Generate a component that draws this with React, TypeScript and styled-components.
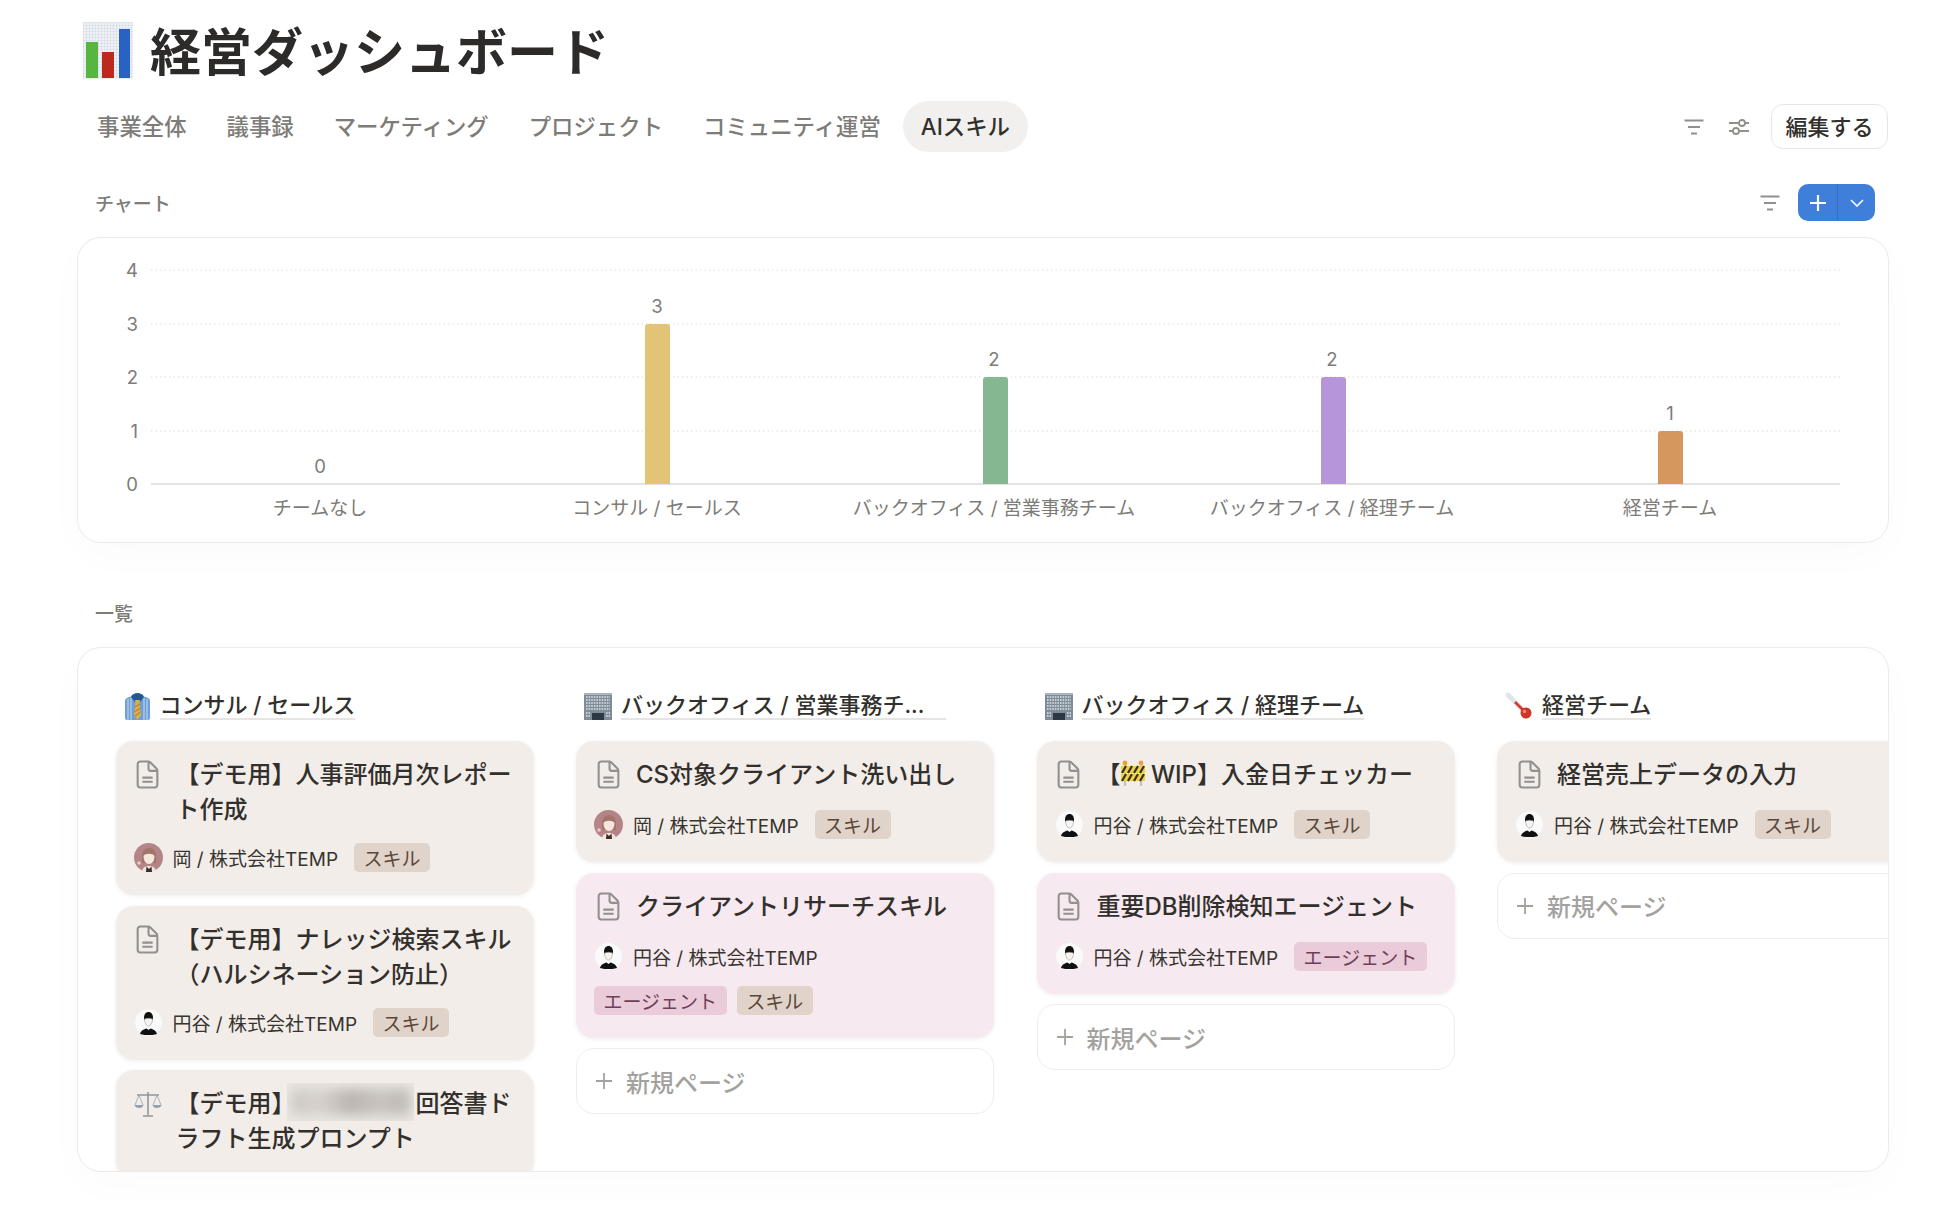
import React from "react";
import styled, { createGlobalStyle } from "styled-components";

const GlobalStyle = createGlobalStyle`
  html, body {
    margin: 0;
    padding: 0;
    background: #ffffff;
    overflow: hidden;
  }
  body {
    font-family: Inter, "Noto Sans CJK JP", sans-serif;
    color: #32302c;
  }
`;

const Page = styled.div`
  width: 1952px;
  height: 1232px;
  box-sizing: border-box;
  padding: 22px 64px 0 77px;
  overflow: hidden;
`;

const TitleRow = styled.div`
  display: flex;
  align-items: center;
  gap: 17px;
  padding-left: 6px;
  height: 57px;
`;

const PageTitle = styled.h1`
  margin: 0;
  padding-top: 3px;
  font-size: 51px;
  line-height: 57px;
  font-weight: 700;
  color: #2c2b29;
`;

const ViewBar = styled.div`
  display: flex;
  align-items: center;
  justify-content: space-between;
  margin-top: 22px;
  height: 51px;
`;

const Tabs = styled.div`
  display: flex;
  gap: 4px;
  padding-left: 2px;
`;

const Tab = styled.div<{ $active?: boolean }>`
  box-sizing: border-box;
  height: 51px;
  padding: 0 18px 4px;
  display: flex;
  align-items: center;
  border-radius: 26px;
  font-size: 22.4px;
  font-weight: 500;
  color: ${(p) => (p.$active ? "#32302c" : "#7d7c78")};
  background: ${(p) => (p.$active ? "#f1f0ee" : "transparent")};
`;

const Tools = styled.div`
  display: flex;
  align-items: center;
  gap: 22px;
`;

const ToolIcons = styled.div`
  display: flex;
  align-items: center;
  gap: 25px;
`;

const EditButton = styled.button`
  box-sizing: border-box;
  width: 117px;
  height: 45px;
  background: #ffffff;
  border: 1.5px solid #e8e7e5;
  border-radius: 12px;
  font-family: inherit;
  font-size: 22px;
  font-weight: 500;
  color: #32302c;
  padding: 0 0 4px;
`;

const SectionBar = styled.div`
  display: flex;
  align-items: center;
  justify-content: space-between;
  height: 37px;
  margin-top: 32px;
  padding: 0 13px 0 18px;
`;

const SectionLabel = styled.div`
  font-size: 19px;
  font-weight: 500;
  color: #7d7c78;
`;

const SectionTools = styled.div`
  display: flex;
  align-items: center;
  gap: 18px;
`;

const NewButton = styled.div`
  display: flex;
  width: 77px;
  height: 37px;
  border-radius: 10px;
  overflow: hidden;
  background: #3f7fd9;
`;

const NewPlus = styled.div`
  flex: 1;
  display: flex;
  align-items: center;
  justify-content: center;
  border-right: 1px solid #3470c4;
`;

const NewCaret = styled.div`
  width: 37px;
  display: flex;
  align-items: center;
  justify-content: center;
`;

const Panel = styled.div`
  box-sizing: border-box;
  width: 1812px;
  background: #ffffff;
  border: 1.5px solid #ecebe9;
  border-radius: 24px;
  box-shadow: 0 12px 44px rgba(0, 0, 0, 0.018);
`;

const ChartPanel = styled(Panel)`
  height: 306px;
  margin-top: 16px;
`;

const ChartSvg = styled.svg`
  display: block;
  font-family: Inter, "Noto Sans CJK JP", sans-serif;
  font-size: 18.5px;
  fill: #7d7c78;
`;

const CategoryLabel = styled.text`
  font-size: 19px;
`;

const ListLabel = styled(SectionLabel)`
  margin-top: 61px;
  padding-left: 18px;
  line-height: 22px;
`;

const BoardPanel = styled(Panel)`
  height: 525px;
  margin-top: 21px;
  padding: 44px 0 0 37.5px;
  display: flex;
  gap: 42.5px;
  overflow: hidden;
`;

const Column = styled.div`
  flex: 0 0 418px;
  display: flex;
  flex-direction: column;
  gap: 10.5px;
`;

const ColumnHead = styled.div`
  display: flex;
  align-items: center;
  gap: 9px;
  height: 28px;
  padding-left: 8px;
  margin-bottom: 10.5px;
`;

const ColumnTitle = styled.div<{ $truncated?: boolean }>`
  min-width: ${(p) => (p.$truncated ? "325px" : "0")};
  font-size: 22px;
  line-height: 26px;
  font-weight: 500;
  color: #32302c;
  white-space: nowrap;
  border-bottom: 2px solid #e6e5e3;
`;

const Card = styled.div<{ $tone: "brown" | "pink" }>`
  flex: none;
  box-sizing: border-box;
  padding: 16px 16px 23px 18px;
  border-radius: 18px;
  background: ${(p) => (p.$tone === "pink" ? "#f7e9f0" : "#f3ede9")};
  box-shadow: 0 1px 4px rgba(60, 40, 30, 0.08);
`;

const CardTitle = styled.div`
  display: flex;
  gap: 14px;
  min-height: 37px;
  font-size: 24px;
  line-height: 35px;
  font-weight: 500;
  color: #32302c;
`;

const IconSlot = styled.div`
  flex: 0 0 28px;
  height: 35px;
  display: flex;
  align-items: center;
  justify-content: center;
`;

const Redacted = styled.span`
  position: relative;
  display: inline-block;
  width: 120px;
  height: 1em;
  vertical-align: -0.1em;
`;

const RedactedBlur = styled.span`
  position: absolute;
  left: -9px;
  top: -7px;
  width: 127px;
  height: 38px;
  overflow: hidden;
  background: #ebe6e2;
  &::after {
    content: "";
    position: absolute;
    inset: 6px 4px;
    filter: blur(6px);
    background: linear-gradient(90deg, #cdc8c4, #d6d1cd 25%, #b9b4b0 50%, #c8c3bf 75%, #bdb8b4);
  }
`;

const CardMeta = styled.div`
  display: flex;
  flex-wrap: wrap;
  gap: 15px 16px;
  margin-top: 16px;
`;

const Person = styled.div`
  display: flex;
  align-items: center;
  gap: 10px;
  height: 29px;
  font-size: 19px;
  color: #37352f;
`;

const TagList = styled.div`
  display: flex;
  gap: 10px;
`;

const Tag = styled.span<{ $kind: "skill" | "agent" }>`
  height: 29px;
  display: flex;
  align-items: center;
  padding: 0 9.5px;
  border-radius: 5px;
  font-size: 19px;
  color: ${(p) => (p.$kind === "agent" ? "#6f3f58" : "#5b4638")};
  background: ${(p) => (p.$kind === "agent" ? "#eacbd9" : "#e0d3ca")};
`;

const NewPage = styled.div`
  flex: none;
  box-sizing: border-box;
  height: 66px;
  display: flex;
  align-items: center;
  gap: 14px;
  padding-left: 19px;
  border: 1.5px solid #eeedeb;
  border-radius: 18px;
  background: #ffffff;
  font-size: 24px;
  font-weight: 500;
  color: #a3a29f;
`;

const FilterIcon = () => (
  <svg width="20" height="16" viewBox="0 0 20 16" fill="none" stroke="#91908d" strokeWidth="2.2">
    <path d="M0.5 1.5H19.5M4 8H16M7 14.5H13" />
  </svg>
);

const SlidersIcon = () => (
  <svg width="20" height="18" viewBox="0 0 20 18" fill="none" stroke="#91908d" strokeWidth="1.8">
    <path d="M0 5H10M16 5H20M0 13H4M10 13H20" />
    <circle cx="13" cy="5" r="3" />
    <circle cx="7" cy="13" r="3" />
  </svg>
);

const DocIcon = () => (
  <svg width="23" height="29" viewBox="0 0 22 28" fill="none" stroke="#91908d" strokeWidth="2">
    <path d="M4 1.5H11.5C12.5 1.5 13.3 1.9 14 2.6L19.4 8C20.1 8.7 20.5 9.5 20.5 10.5V24A2.5 2.5 0 0 1 18 26.5H4A2.5 2.5 0 0 1 1.5 24V4A2.5 2.5 0 0 1 4 1.5Z" />
    <path d="M12 2V8.5A2 2 0 0 0 14 10.5H20" />
    <path d="M6 17H16M6 21H16" />
  </svg>
);

const BarChartEmoji = () => (
  <svg width="50" height="57" viewBox="0 0 50 57">
    <defs>
      <pattern id="chartGrid" width="3" height="3" patternUnits="userSpaceOnUse">
        <rect width="3" height="3" fill="#eef1f5" />
        <path d="M0 0H3M0 0V3" stroke="#d3dae4" strokeWidth="1" />
      </pattern>
    </defs>
    <rect width="50" height="57" fill="url(#chartGrid)" />
    <rect x="3" y="20" width="12" height="36" fill="#56b63f" />
    <rect x="19" y="30" width="12" height="26" fill="#bb2a1c" />
    <rect x="36" y="7" width="11" height="49" fill="#2a62c4" />
  </svg>
);

const ShirtEmoji = () => (
  <svg width="27" height="27" viewBox="0 0 27 27">
    <path d="M1 8C1 5 5 4 9 3H18C22 4 26 5 26 8V25C26 26 25 27 24 27H3C2 27 1 26 1 25Z" fill="#6f9fd8" />
    <path d="M4 6V27M7 5V27M20 5V27M23 6V27" stroke="#b8d2ef" strokeWidth="1.2" />
    <path d="M7 4C8 1 11 0 13.5 0S19 1 20 4L16 9H11Z" fill="#23598f" />
    <path d="M11 7H16L15.5 10L17 22L13.5 27L10 22L11.5 10Z" fill="#e0ad45" />
    <path d="M11 14L16 11M10.5 19L16.5 15M11 23L16.5 19" stroke="#a9762a" strokeWidth="1" />
  </svg>
);

const BuildingEmoji = () => (
  <svg width="28" height="27" viewBox="0 0 28 27">
    <rect width="28" height="27" fill="#7f8c98" />
    <rect y="0" width="28" height="2" fill="#a9b4bd" />
    <path d="M2 4H26M2 7H26M2 10H26M2 13H26M2 16H26" stroke="#dce3e9" strokeWidth="1.4" strokeDasharray="1.6 1" />
    <rect x="8" y="20" width="12" height="7" fill="#2c3844" />
    <path d="M2 20H6M2 23H6M22 20H26M22 23H26" stroke="#dce3e9" strokeWidth="1.4" strokeDasharray="1.6 1" />
  </svg>
);

const ThermometerEmoji = () => (
  <svg width="28" height="28" viewBox="0 0 28 28">
    <path d="M3 3L19 19" stroke="#e1e6ea" strokeWidth="5" strokeLinecap="round" />
    <path d="M10 10L20 20" stroke="#d53a2c" strokeWidth="2.6" />
    <circle cx="21" cy="21" r="5.5" fill="#cf3426" />
    <circle cx="19.5" cy="19.5" r="1.8" fill="#ef8a7e" />
  </svg>
);

const BarrierEmoji = () => (
  <svg width="24" height="26" viewBox="0 0 24 26" style={{ verticalAlign: "-0.14em" }}>
    <path d="M4 4V26M20 4V26" stroke="#c3c5c7" strokeWidth="2.4" />
    <circle cx="4" cy="3" r="2.4" fill="#f0a030" />
    <circle cx="20" cy="3" r="2.4" fill="#f0a030" />
    <rect x="0" y="6" width="24" height="7" fill="#f2cf45" />
    <rect x="0" y="14" width="24" height="7" fill="#f2cf45" />
    <path d="M1 13L5 6M7 13L11 6M13 13L17 6M19 13L23 6M1 21L5 14M7 21L11 14M13 21L17 14M19 21L23 14" stroke="#33312c" strokeWidth="2.2" />
  </svg>
);

const ScalesEmoji = () => (
  <svg width="28" height="28" viewBox="0 0 28 28" fill="none">
    <path d="M14 2V25M3 5H25M9 26H19" stroke="#8f969d" strokeWidth="1.6" />
    <path d="M5 5L1 15M5 5L9 15M23 5L19 15M23 5L27 15" stroke="#a6acb2" strokeWidth="0.9" />
    <path d="M0.5 15H9.5C9 19 1 19 0.5 15ZM18.5 15H27.5C27 19 19 19 18.5 15Z" fill="#8ea0b3" />
  </svg>
);

const OkaAvatar = () => (
  <svg width="29" height="29" viewBox="0 0 29 29">
    <circle cx="14.5" cy="14.5" r="14.5" fill="#b58488" />
    <path d="M8 14C8 8 11 5 15 5S22 8 22 14V20H8Z" fill="#a3756a" />
    <path d="M9.5 13C11 10 19 10 20.5 13C20.5 18 18 21 15 21S9.5 18 9.5 13Z" fill="#f7e6dc" />
    <path d="M8 29C8 25 11 23 15 23S22 25 22 29Z" fill="#efe6dd" />
    <path d="M12.5 23.5L15 26L17.5 23.5L18 29H12Z" fill="#3a2c28" />
    <circle cx="5" cy="20" r="1.8" fill="#e4cdc7" />
  </svg>
);

const TsuburayaAvatar = () => (
  <svg width="29" height="29" viewBox="0 0 29 29">
    <circle cx="14.5" cy="14.5" r="14" fill="#fafafa" stroke="#eeeded" />
    <path d="M10 10C10 6 12 4 14.5 4S19 6 19 10L18.5 12H10.5Z" fill="#111111" />
    <path d="M10.5 11C10.5 15 12.5 18 14.5 18S18.5 15 18.5 11C16 10 13 10 10.5 11Z" fill="#f7f3f0" stroke="#888888" strokeWidth="0.5" />
    <path d="M6 26C6.5 23 10 21 12.5 20.5L14.5 22L16.5 20.5C19 21 22.5 23 23 26C20 27 17 27 14.5 27S9 27 6 26Z" fill="#111111" />
  </svg>
);

const chartLeft = 73;
const chartRight = 1762;
const yTicks = [
  { label: "4", y: 32 },
  { label: "3", y: 86 },
  { label: "2", y: 139 },
  { label: "1", y: 193 },
];
const baseY = 246;

const chartBars = [
  { name: "チームなし", value: 0, center: 242, barX: 0, top: baseY, color: "" },
  { name: "コンサル / セールス", value: 3, center: 579, barX: 567, top: 86, color: "#e3c476" },
  { name: "バックオフィス / 営業事務チーム", value: 2, center: 916, barX: 905, top: 139, color: "#85b891" },
  { name: "バックオフィス / 経理チーム", value: 2, center: 1254, barX: 1243, top: 139, color: "#b795d9" },
  { name: "経営チーム", value: 1, center: 1592, barX: 1580, top: 193, color: "#d6975f" },
];

const Chart = () => (
  <ChartSvg width="1809" height="303" viewBox="0 0 1809 303">
    {yTicks.map((t) => (
      <line key={t.label} x1={chartLeft} x2={chartRight} y1={t.y} y2={t.y} stroke="#dedddb" strokeDasharray="1.5 3" />
    ))}
    <line x1={chartLeft} x2={chartRight} y1={baseY} y2={baseY} stroke="#e4e3e1" strokeWidth="2" />
    {[...yTicks, { label: "0", y: baseY }].map((t) => (
      <text key={t.label} x="60" y={t.y} textAnchor="end" dominantBaseline="central">
        {t.label}
      </text>
    ))}
    {chartBars.map((b) => (
      <g key={b.name}>
        {b.value > 0 && (
          <path
            d={`M${b.barX} ${baseY}V${b.top + 3}Q${b.barX} ${b.top} ${b.barX + 3} ${b.top}H${b.barX + 22}Q${b.barX + 25} ${b.top} ${b.barX + 25} ${b.top + 3}V${baseY}Z`}
            fill={b.color}
          />
        )}
        <text x={b.center} y={b.top - 18} textAnchor="middle" dominantBaseline="central">
          {b.value}
        </text>
        <CategoryLabel x={b.center} y="270" textAnchor="middle" dominantBaseline="central">
          {b.name}
        </CategoryLabel>
      </g>
    ))}
  </ChartSvg>
);

type CardData = {
  title: React.ReactNode;
  tone: "brown" | "pink";
  who?: "oka" | "tsuburaya";
  tags?: ("skill" | "agent")[];
  icon?: React.ReactNode;
};

const people = {
  oka: { name: "岡 / 株式会社TEMP", avatar: <OkaAvatar /> },
  tsuburaya: { name: "円谷 / 株式会社TEMP", avatar: <TsuburayaAvatar /> },
};

const tagLabels = { skill: "スキル", agent: "エージェント" };

const columns: { title: string; truncated?: boolean; emoji: React.ReactNode; cards: CardData[]; hasNew: boolean }[] = [
  {
    title: "コンサル / セールス",
    emoji: <ShirtEmoji />,
    hasNew: false,
    cards: [
      { title: "【デモ用】人事評価月次レポート作成", tone: "brown", who: "oka", tags: ["skill"] },
      { title: "【デモ用】ナレッジ検索スキル（ハルシネーション防止）", tone: "brown", who: "tsuburaya", tags: ["skill"] },
      {
        // the rest of this card sits below the panel's clip
        title: (
          <>
            【デモ用】
            <Redacted>
              <RedactedBlur />
            </Redacted>
            回答書ドラフト生成プロンプト
          </>
        ),
        tone: "brown",
        icon: <ScalesEmoji />,
      },
    ],
  },
  {
    title: "バックオフィス / 営業事務チ...",
    truncated: true,
    emoji: <BuildingEmoji />,
    hasNew: true,
    cards: [
      { title: "CS対象クライアント洗い出し", tone: "brown", who: "oka", tags: ["skill"] },
      { title: "クライアントリサーチスキル", tone: "pink", who: "tsuburaya", tags: ["agent", "skill"] },
    ],
  },
  {
    title: "バックオフィス / 経理チーム",
    emoji: <BuildingEmoji />,
    hasNew: true,
    cards: [
      {
        title: (
          <>
            【<BarrierEmoji /> WIP】入金日チェッカー
          </>
        ),
        tone: "brown",
        who: "tsuburaya",
        tags: ["skill"],
      },
      { title: "重要DB削除検知エージェント", tone: "pink", who: "tsuburaya", tags: ["agent"] },
    ],
  },
  {
    title: "経営チーム",
    emoji: <ThermometerEmoji />,
    hasNew: true,
    cards: [{ title: "経営売上データの入力", tone: "brown", who: "tsuburaya", tags: ["skill"] }],
  },
];

const App = () => (
  <Page>
    <GlobalStyle />
    <TitleRow>
      <BarChartEmoji />
      <PageTitle>経営ダッシュボード</PageTitle>
    </TitleRow>
    <ViewBar>
      <Tabs>
        {["事業全体", "議事録", "マーケティング", "プロジェクト", "コミュニティ運営"].map((t) => (
          <Tab key={t}>{t}</Tab>
        ))}
        <Tab $active>AIスキル</Tab>
      </Tabs>
      <Tools>
        <ToolIcons>
          <FilterIcon />
          <SlidersIcon />
        </ToolIcons>
        <EditButton>編集する</EditButton>
      </Tools>
    </ViewBar>
    <SectionBar>
      <SectionLabel>チャート</SectionLabel>
      <SectionTools>
        <FilterIcon />
        <NewButton>
          <NewPlus>
            <svg width="18" height="18" viewBox="0 0 18 18" stroke="#ffffff" strokeWidth="2.2">
              <path d="M9 1V17M1 9H17" />
            </svg>
          </NewPlus>
          <NewCaret>
            <svg width="14" height="8" viewBox="0 0 14 8" fill="none" stroke="#ffffff" strokeWidth="1.6">
              <path d="M1 1L7 7L13 1" />
            </svg>
          </NewCaret>
        </NewButton>
      </SectionTools>
    </SectionBar>
    <ChartPanel>
      <Chart />
    </ChartPanel>
    <ListLabel>一覧</ListLabel>
    <BoardPanel>
      {columns.map((col) => (
        <Column key={col.title}>
          <ColumnHead>
            {col.emoji}
            <ColumnTitle $truncated={col.truncated}>{col.title}</ColumnTitle>
          </ColumnHead>
          {col.cards.map((card, i) => (
            <Card key={i} $tone={card.tone}>
              <CardTitle>
                <IconSlot>{card.icon ?? <DocIcon />}</IconSlot>
                <div>{card.title}</div>
              </CardTitle>
              {card.who && (
                <CardMeta>
                  <Person>
                    {people[card.who].avatar}
                    {people[card.who].name}
                  </Person>
                  <TagList>
                    {card.tags?.map((tag) => (
                      <Tag key={tag} $kind={tag}>
                        {tagLabels[tag]}
                      </Tag>
                    ))}
                  </TagList>
                </CardMeta>
              )}
            </Card>
          ))}
          {col.hasNew && (
            <NewPage>
              <svg width="16" height="16" viewBox="0 0 16 16" stroke="#a3a29f" strokeWidth="1.8">
                <path d="M8 0V16M0 8H16" />
              </svg>
              新規ページ
            </NewPage>
          )}
        </Column>
      ))}
    </BoardPanel>
  </Page>
);

export default App;
